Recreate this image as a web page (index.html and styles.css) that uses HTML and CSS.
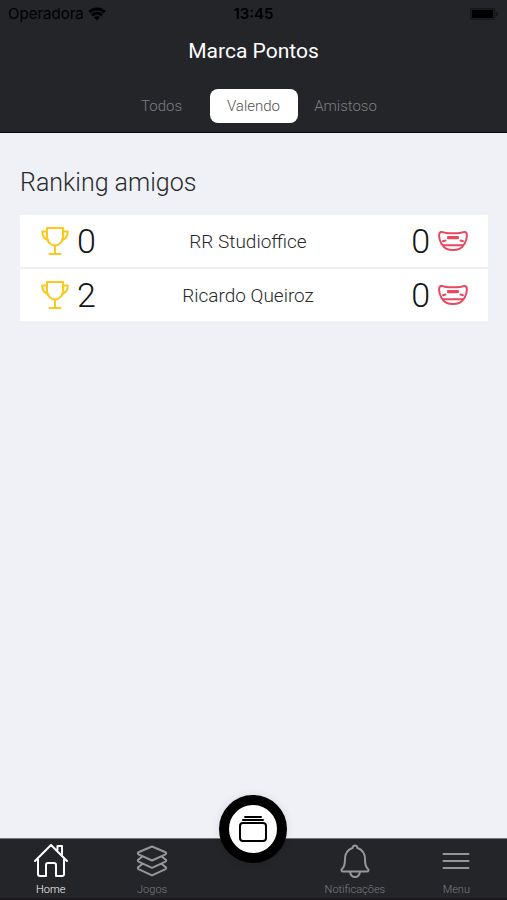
FILE: index.html
```html
<!DOCTYPE html>
<html lang="pt-BR">
<head>
<meta charset="utf-8">
<meta name="viewport" content="width=device-width, initial-scale=1">
<title>Marca Pontos</title>
<link rel="stylesheet" href="styles.css">
</head>
<body>
<svg class="sprite" aria-hidden="true">
  <symbol id="trophy" viewBox="0 0 28 28">
    <path d="M6 1h16v9c0 4.500-3.500 8.500-8 8.500S6 14.500 6 10zM6 4.500H1.200c0 5 2 7.500 6 8.500M22 4.500h4.800c0 5-2 7.500-6 8.500M14 18.500V27M8.500 27h11"/>
  </symbol>
  <symbol id="mouth" viewBox="0 0 30 20">
    <path d="M3 1c1.500-.3 3 .7 5 .9 4 .4 10 .4 14 0 2-.2 3.500-1.200 5-.9 1.700.4 2 2 1.900 4-.2 3-1 5.500-2.400 8-.5.900-1.200 1.200-2.500 1.200H6c-1.300 0-2-.3-2.500-1.200C2.100 10.500 1.300 8 1.100 5 1 3 1.300 1.400 3 1zM4.500 14.200C6.500 17.500 9.500 19 15 19s8.500-1.500 10.500-4.800"/>
    <path d="M10 6h10M10 7.200h10M5 10.300l2.500-.8M25 10.300l-2.500-.8"/>
  </symbol>
</svg>
<header class="top">
  <div class="status">
    <span class="carrier">Operadora
      <svg width="18" height="14" viewBox="0 0 18 14" aria-hidden="true"><path class="wifi" d="M1.200 5.200c4.500-4.200 11.100-4.200 15.600 0M4 8.300c3-2.700 7-2.700 10 0"/><path d="M9 13.500 5.900 10.300c1.900-1.500 4.300-1.500 6.200 0z"/></svg>
    </span>
    <time class="clock">13:45</time>
    <svg class="battery" width="29" height="12" viewBox="0 0 29 12" aria-hidden="true"><rect class="case" x=".5" y=".5" width="24" height="11" rx="3"/><rect x="2" y="2" width="21" height="8" rx="1"/><path class="case" d="M27 4.500v3"/></svg>
  </div>
  <h1>Marca Pontos</h1>
  <div class="tabs">
    <button type="button">Todos</button>
    <button type="button" class="active" aria-pressed="true">Valendo</button>
    <button type="button">Amistoso</button>
  </div>
</header>
<main>
  <h2>Ranking amigos</h2>
  <ul class="ranking">
    <li>
      <span class="score"><svg class="trophy" width="28" height="28"><use href="#trophy"/></svg>0</span>
      <span class="name">RR Studioffice</span>
      <span class="score losses">0<svg class="mouth" width="30" height="20"><use href="#mouth"/></svg></span>
    </li>
    <li>
      <span class="score"><svg class="trophy" width="28" height="28"><use href="#trophy"/></svg>2</span>
      <span class="name">Ricardo Queiroz</span>
      <span class="score losses">0<svg class="mouth" width="30" height="20"><use href="#mouth"/></svg></span>
    </li>
  </ul>
</main>
<nav class="bar">
  <a href="#home" class="active"><svg width="36" height="36" viewBox="0 0 36 36"><path d="M2 18 18 2l16 16M5 16v15q0 2 2 2h6V22q0-2 2-2h6q2 0 2 2v11h6q2 0 2-2V16M24.500 7V3H29v9"/></svg>Home</a>
  <a href="#jogos"><svg width="36" height="36" viewBox="0 0 36 36"><path d="M18 3.500 31 9q2.500 1.300 0 2.600L18 17.500 5 11.600Q2.500 10.300 5 9zM7.500 14 5 16.200q-2.500 1.300 0 2.600l13 6 13-6q2.500-1.300 0-2.600L28.500 14M7.500 21.500 5 23.700q-2.500 1.300 0 2.600l13 6 13-6q2.500-1.300 0-2.600l-2.500-2.200"/></svg>Jogos</a>
  <a href="#partidas" class="main-action" aria-label="Partidas"><svg width="28" height="28" viewBox="0 0 28 28"><rect x="1" y="8" width="26" height="18" rx="3"/><path d="M4 5h20M6 2h16"/></svg></a>
  <a href="#notificacoes"><svg width="36" height="36" viewBox="0 0 36 36"><path d="M18 2.500q2 0 2.500 2.500C26 7 28 11 28 16c0 6 .5 8 3 10 1 1 .5 2.500-1 2.500H6c-1.500 0-2-1.500-1-2.500 2.500-2 3-4 3-10 0-5 2-9 7.500-11Q16 2.500 18 2.500zM13 29q1 5 5 5t5-5"/></svg>Notificações</a>
  <a href="#menu"><svg width="36" height="36" viewBox="0 0 36 36"><path d="M5.500 11h25M5.500 18h25M5.500 25h25"/></svg>Menu</a>
</nav>
</body>
</html>
```

FILE: styles.css
```css
* { box-sizing: border-box; }

body {
  margin: 0;
  min-height: 100vh;
  display: flex;
  flex-direction: column;
  background: #eff1f6;
  color: #28292b;
  font-family: Roboto, "Liberation Sans", sans-serif;
  font-weight: 300;
}

svg {
  flex: none;
  fill: none;
  stroke: currentColor;
  stroke-width: 2;
  stroke-linecap: round;
  stroke-linejoin: round;
}

.sprite {
  position: absolute;
  width: 0;
  height: 0;
}

.top {
  background: #242529;
  border-bottom: 1px solid #08090b;
  padding-bottom: 9px;
}

.status {
  display: grid;
  grid-template-columns: 1fr auto 1fr;
  align-items: center;
  height: 28px;
  padding: 0 8px;
  color: #000;
  font: 400 15px/18px Inter, sans-serif;
}

.status svg {
  fill: #000;
  stroke: none;
}

.status .wifi {
  fill: none;
  stroke: #000;
  stroke-width: 3;
  stroke-linecap: butt;
}

.status .case {
  fill: none;
  stroke: #17181b;
}

.carrier {
  display: flex;
  align-items: center;
  gap: 4px;
}

.clock { font-weight: 600; }

.battery { justify-self: end; }

h1 {
  margin: 10px 0 24px;
  color: #fff;
  font-size: 21px;
  line-height: 27px;
  font-weight: 400;
  text-align: center;
}

.tabs {
  display: flex;
  justify-content: center;
  gap: 4px;
}

.tabs button {
  width: 88px;
  height: 34px;
  padding: 0;
  border: 0;
  border-radius: 8px;
  background: none;
  color: #7c7d81;
  font: inherit;
  font-size: 15px;
}

.tabs .active {
  background: #fff;
  color: #505155;
}

main {
  flex: 1;
  padding: 34px 19px 34px 20px;
}

h2 {
  margin: 0 0 16px;
  font-size: 25px;
  line-height: 32px;
  font-weight: 300;
}

.ranking {
  margin: 0;
  padding: 0;
  list-style: none;
}

.ranking li {
  display: grid;
  grid-template-columns: 1fr auto 1fr;
  align-items: center;
  height: 54px;
  padding: 0 20px;
  background: #fff;
  border-bottom: 2px solid #f0f0f2;
}

.name {
  padding-right: 12px;
  font-size: 19px;
}

.score {
  display: flex;
  align-items: center;
  gap: 8px;
  padding-left: 1px;
  color: #151515;
  font-size: 34px;
  line-height: 40px;
}

.losses { justify-content: flex-end; }

.trophy {
  color: #fcc81c;
}

.mouth { color: #e84860; }

.bar {
  display: grid;
  grid-template-columns: repeat(5, 1fr);
  height: 62px;
  background: #242529;
  border-top: 1px solid #77787b;
  border-bottom: 2px solid #1d171d;
}

.bar a {
  display: flex;
  flex-direction: column;
  align-items: center;
  padding-top: 4px;
  gap: 3px;
  color: #7c7d81;
  font-size: 11px;
  line-height: 15px;
  text-decoration: none;
}

.bar a svg { color: #95969a; }

.bar .active,
.bar .active svg { color: #fff; }

.bar .main-action {
  justify-content: center;
  justify-self: center;
  width: 68px;
  height: 68px;
  margin-top: -44px;
  padding: 0;
  border: 10px solid #000;
  border-radius: 50%;
  background: #fff;
  box-shadow: 0 0 8px #0000001a;
}

.bar .main-action svg { color: #000; }
```
